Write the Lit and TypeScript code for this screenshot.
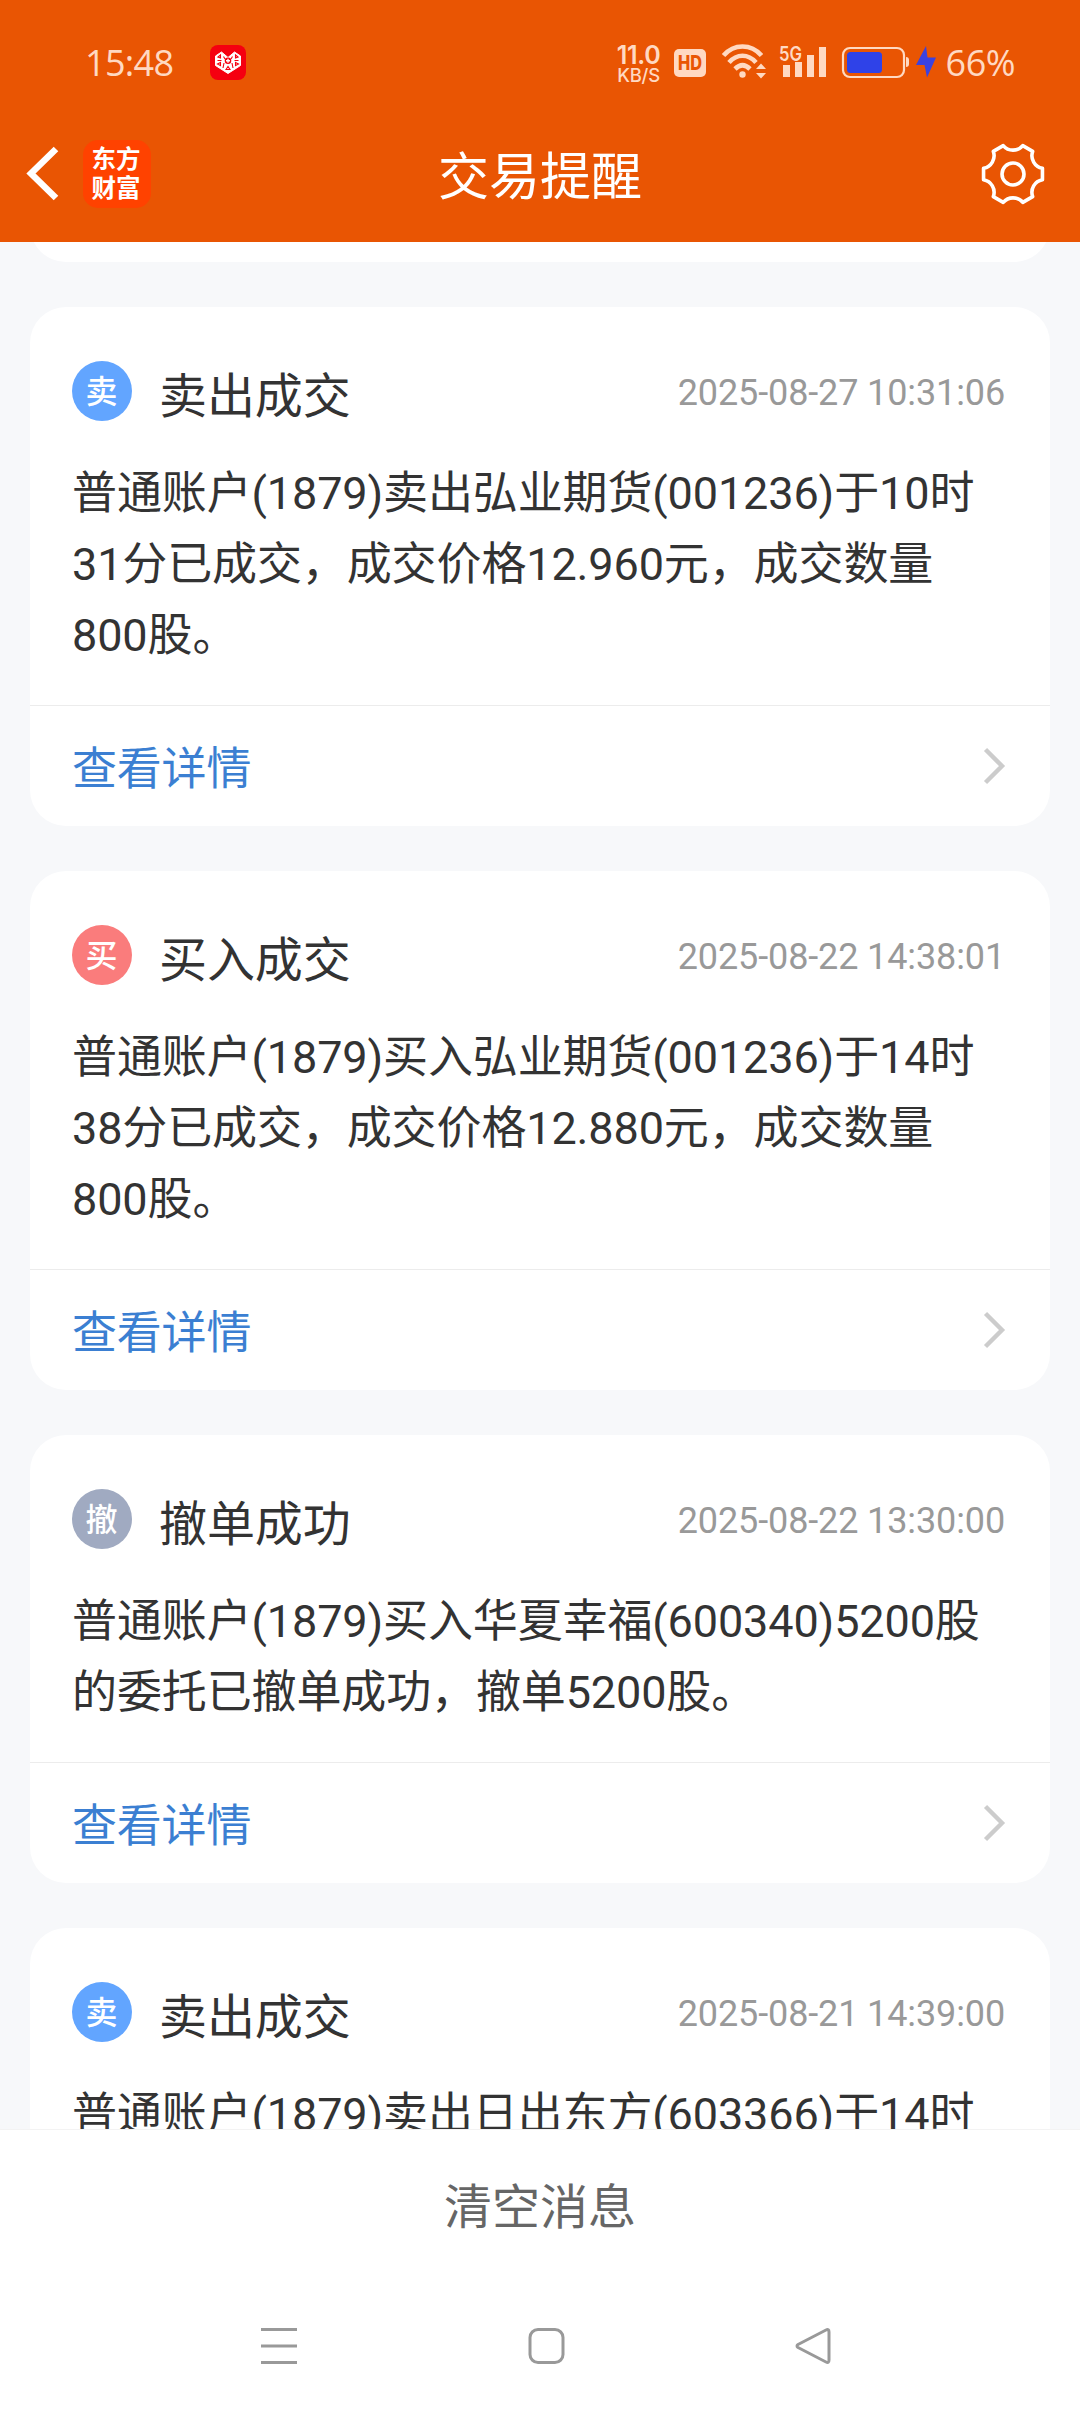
import { LitElement, html, css } from "lit";
import { customElement, property } from "lit/decorators.js";

interface Notice {
  kind: "sell" | "buy" | "cancel";
  badge: string;
  title: string;
  time: string;
  lines: string[];
}

const NOTICES: Notice[] = [
  {
    kind: "sell", badge: "卖", title: "卖出成交", time: "2025-08-27 10:31:06",
    lines: ["普通账户(1879)卖出弘业期货(001236)于10时", "31分已成交，成交价格12.960元，成交数量", "800股。"],
  },
  {
    kind: "buy", badge: "买", title: "买入成交", time: "2025-08-22 14:38:01",
    lines: ["普通账户(1879)买入弘业期货(001236)于14时", "38分已成交，成交价格12.880元，成交数量", "800股。"],
  },
  {
    kind: "cancel", badge: "撤", title: "撤单成功", time: "2025-08-22 13:30:00",
    lines: ["普通账户(1879)买入华夏幸福(600340)5200股", "的委托已撤单成功，撤单5200股。"],
  },
  {
    kind: "sell", badge: "卖", title: "卖出成交", time: "2025-08-21 14:39:00",
    lines: ["普通账户(1879)卖出日出东方(603366)于14时"],
  },
];

// Outline of the six-toothed settings gear, centred on 0,0.
function gearPath(): string {
  const p = (r: number, deg: number) => {
    const a = (deg * Math.PI) / 180;
    return `${(r * Math.cos(a)).toFixed(2)} ${(r * Math.sin(a)).toFixed(2)}`;
  };
  let d = "";
  for (let i = 0; i < 6; i++) {
    const c = i * 60;
    d += `${i ? "L" : "M"}${p(30, c - 11)}L${p(30, c + 11)}`;
    d += `A12.8 12.8 0 0 0 ${p(30, c + 49)}`;
  }
  return d + "Z";
}

@customElement("status-bar")
export class StatusBar extends LitElement {
  static styles = css`
    :host { display: flex; align-items: center; height: 112px; padding: 12px 65px 0 85px; box-sizing: border-box; color: #ffd9c2; }
    .clock { font: 500 36px/40px "Open Sans", sans-serif; letter-spacing: -0.7px; width: 125px; padding-top: 1px; white-space: nowrap; }
    .grow { flex: 1; }
    .speed { display: flex; flex-direction: column; width: 46px; padding-top: 4px; text-align: center; white-space: nowrap; }
    .rate { font: 600 25px/21px Inter, sans-serif; letter-spacing: -0.3px; }
    .unit { font: 500 18.500px/18px Inter, sans-serif; letter-spacing: -0.3px; }
    svg { display: block; }
    .icons { margin-right: 4px; }
    .pct { font: 500 36px/40px "Open Sans", sans-serif; letter-spacing: -0.5px; padding-top: 2px; white-space: nowrap; }
    text { font-family: Inter, sans-serif; }
  `;
  render() {
    return html`
      <span class="clock">15:48</span>
      <svg width="36" height="35" viewBox="210 45 36 35">
        <rect x="210" y="45" width="36" height="35" rx="8" fill="#f50010" />
        <path d="M228 73.500L215.500 65.500V56L221.500 52L228 57.500L234.500 52L240.500 56V65.500Z" fill="#fff" stroke="#fff" stroke-width="1" stroke-linejoin="round" />
        <path d="M218 57l2.500-2v3zM238 57l-2.500-2v3zM217.500 60.500h4M234.500 60.500h4M217.500 64l3 1.500v-3zM238.500 64l-3 1.500v-3zM223.500 56.500l1.500 2.500M232.500 56.500l-1.500 2.500M224 63l-1 5M232 63l1 5M226 69.500l2-3 2 3z" stroke="#f50010" stroke-width="1.100" fill="none" />
        <circle cx="228" cy="60.800" r="3.300" fill="#f50010" />
        <path d="M226 60.800H230M228 58.800V62.800" stroke="#fff" stroke-width="1.400" />
      </svg>
      <span class="grow"></span>
      <span class="speed"><span class="rate">11.0</span><span class="unit">KB/S</span></span>
      <svg class="icons" width="280" height="44" viewBox="662 40 280 44" fill="#ffd9c2">
        <rect x="674" y="49" width="32" height="28" rx="5" />
        <text x="690" y="70" font-size="20" font-weight="800" text-anchor="middle" textLength="24" lengthAdjust="spacingAndGlyphs" fill="#e95503">HD</text>
        <g fill="none" stroke="#ffd9c2" stroke-width="4.600">
          <path d="M723.500 55.500C734 43.500 751 43.500 761.500 55.500" />
          <path d="M729 62.500C737 53.500 748 53.500 756 62.500" />
          <path d="M735 69C740 64 745 64 750 69" />
        </g>
        <circle cx="742.500" cy="74.500" r="3.200" />
        <path d="M756 69L761 63.500L766 69ZM756 73L761 78.500L766 73Z" />
        <text x="779" y="60.500" font-size="20" font-weight="600" textLength="23" lengthAdjust="spacingAndGlyphs">5G</text>
        <path d="M783 65h7v12h-7zM795 62h7v15h-7zM807 55h7v22h-7zM819 47h7v30h-7z" />
        <rect x="843" y="48" width="61" height="29" rx="7" fill="none" stroke="#ffd9c2" stroke-width="2.200" />
        <rect x="847" y="52" width="35" height="21" rx="3.500" fill="#2f42e8" />
        <path d="M906 57q3 0 3 3v4q0 3-3 3z" />
        <path d="M926 46L916 65H924.500L927 77.500L936 57.500H927.500Z" fill="#3a42e0" />
      </svg>
      <span class="pct">66%</span>
    `;
  }
}

@customElement("title-bar")
export class TitleBar extends LitElement {
  static styles = css`
    :host { display: grid; grid-template-columns: 1fr auto 1fr; align-items: center; height: 130px; padding: 0 34px 6px 25px; box-sizing: border-box; color: #fff; }
    .left { display: flex; align-items: center; gap: 22px; }
    .logo { display: flex; flex-direction: column; align-items: center; justify-content: center; width: 68px; height: 68px; padding: 0 2px 5px 0; box-sizing: border-box; border-radius: 15px; background: #ff4200; font: 700 24.500px/29px "Noto Sans CJK SC", sans-serif; }
    .title { font: 400 51px/60px Roboto, "Noto Sans CJK SC", sans-serif; padding: 8px 0 0 9px; }
    .gear { justify-self: end; }
    svg { display: block; }
  `;
  render() {
    return html`
      <div class="left">
        <svg width="36" height="60" viewBox="25 145 36 60"><path d="M56 150L31 174.500L56 199" fill="none" stroke="#fff" stroke-width="6.500" /></svg>
        <div class="logo"><span>东方</span><span>财富</span></div>
      </div>
      <span class="title">交易提醒</span>
      <svg class="gear" width="66" height="66" viewBox="-33 -33 66 66" fill="none" stroke="#fff" stroke-width="3.600" stroke-linejoin="round">
        <path d=${gearPath()} /><circle r="11" />
      </svg>
    `;
  }
}

@customElement("notice-card")
export class NoticeCard extends LitElement {
  @property({ attribute: false }) notice!: Notice;
  static styles = css`
    :host { display: block; flex: none; background: #fff; border-radius: 36px; font-family: Roboto, "Noto Sans CJK SC", sans-serif; color: #333; }
    .head { display: flex; align-items: center; height: 60px; padding: 54px 45px 0 42px; }
    .badge { display: flex; align-items: center; justify-content: center; width: 60px; height: 60px; padding: 0 1px 4px 0; box-sizing: border-box; border-radius: 50%; color: #fff; font: 500 32px/32px "Noto Sans CJK SC", sans-serif; }
    .sell { background: #62a5ff; }
    .buy { background: #fa7c7c; }
    .cancel { background: #a0aac1; }
    .title { flex: 1; padding: 12px 0 0 27px; font-size: 48px; line-height: 60px; letter-spacing: -0.1px; }
    .time { padding-top: 3px; font-size: 36px; line-height: 44px; letter-spacing: -0.12px; color: #999; }
    .body { padding: 37px 42px 34px; font-size: 45px; line-height: 71px; letter-spacing: -0.12px; white-space: nowrap; }
    .line { display: block; }
    .more { display: flex; align-items: center; justify-content: space-between; height: 120px; border-top: 1px solid #ececec; padding: 0 42px; font-size: 45px; letter-spacing: -0.2px; color: #3b7fd2; }
    .label { padding-bottom: 1px; }
    svg { display: block; }
  `;
  render() {
    const n = this.notice;
    return html`
      <div class="head">
        <span class="badge ${n.kind}">${n.badge}</span>
        <span class="title">${n.title}</span>
        <span class="time">${n.time}</span>
      </div>
      <div class="body">${n.lines.map((l) => html`<span class="line">${l}</span>`)}</div>
      <div class="more">
        <span class="label">查看详情</span>
        <svg width="26" height="40" viewBox="982 746 26 40"><path d="M985.500 749.500L1002 766L985.500 782.500" fill="none" stroke="#ccc" stroke-width="4.400" /></svg>
      </div>
    `;
  }
}

@customElement("app-root")
export class AppRoot extends LitElement {
  static styles = css`
    :host { display: flex; flex-direction: column; width: 1080px; height: 2412px; overflow: hidden; background: #fff; }
    .top { flex: none; height: 242px; background: #e95503; }
    .list { display: flex; flex-direction: column; gap: 45px; height: 1887px; flex: none; overflow: hidden; background: #f7f8fa; padding: 0 30px; box-sizing: border-box; }
    .previous { flex: none; height: 100px; margin-top: -80px; border-radius: 36px; background: #fff; }
    .clear { display: flex; align-items: center; justify-content: center; flex: none; height: 152px; padding-top: 4px; border-top: 1px solid #f3f3f3; box-sizing: border-box; font: 400 48px/60px Roboto, "Noto Sans CJK SC", sans-serif; color: #666; }
    .keys { display: flex; align-items: center; justify-content: space-between; height: 131px; padding: 0 247px 2px 259px; box-sizing: border-box; }
    svg { display: block; }
  `;
  render() {
    return html`
      <div class="top"><status-bar></status-bar><title-bar></title-bar></div>
      <div class="list">
        <div class="previous"></div>
        ${NOTICES.map((n) => html`<notice-card .notice=${n}></notice-card>`)}
      </div>
      <div class="clear">清空消息</div>
      <div class="keys">
        <svg width="40" height="40" fill="none" stroke="#999" stroke-width="3"><path d="M2 3.500H38M2 20H38M2 36.500H38" /></svg>
        <svg width="40" height="40" fill="none" stroke="#999" stroke-width="3"><rect x="4" y="3.500" width="33" height="33" rx="8" /></svg>
        <svg width="40" height="40" fill="none" stroke="#999" stroke-width="3" stroke-linejoin="round"><path d="M33 4Q36 2.500 36 6V34Q36 37.500 33 36L5 21.500Q3 20 5 18.500Z" /></svg>
      </div>
    `;
  }
}
